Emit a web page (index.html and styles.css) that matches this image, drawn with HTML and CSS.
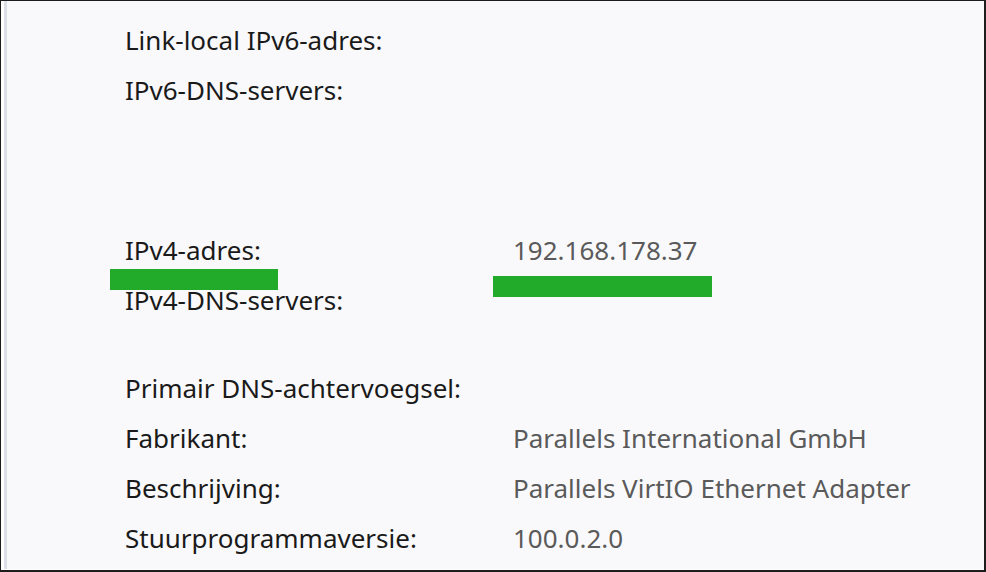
FILE: index.html
```html
<!DOCTYPE html>
<html lang="nl">
<head>
<meta charset="utf-8">
<title>Netwerkdetails</title>
<link rel="stylesheet" href="styles.css">
</head>
<body>
<div class="frame">
  <div class="panel">
    <div class="group group-a">
      <div class="row"><span class="label">Link-local IPv6-adres:</span><span class="value"></span></div>
      <div class="row"><span class="label">IPv6-DNS-servers:</span><span class="value"></span></div>
    </div>
    <div class="group group-b">
      <div class="row"><span class="label">IPv4-adres:</span><span class="value">192.168.178.37</span></div>
      <div class="row"><span class="label">IPv4-DNS-servers:</span><span class="value"></span></div>
    </div>
    <div class="group group-c">
      <div class="row"><span class="label">Primair DNS-achtervoegsel:</span><span class="value"></span></div>
      <div class="row"><span class="label">Fabrikant:</span><span class="value">Parallels International GmbH</span></div>
      <div class="row"><span class="label">Beschrijving:</span><span class="value">Parallels VirtIO Ethernet Adapter</span></div>
      <div class="row"><span class="label">Stuurprogrammaversie:</span><span class="value">100.0.2.0</span></div>
    </div>
    <div class="mark mark-1"></div>
    <div class="mark mark-2"></div>
  </div>
</div>
</body>
</html>
```
FILE: styles.css
```css
html, body {
  margin: 0;
  padding: 0;
  background: #ffffff;
}
.frame {
  box-sizing: border-box;
  width: 986px;
  height: 572px;
  border-top: 1px solid #1c1c1c;
  border-left: 1px solid #1c1c1c;
  border-right: 2px solid #1c1c1c;
  border-bottom: 2px solid #1c1c1c;
  background: #ffffff;
  padding: 0 0 1px 3px;
  overflow: hidden;
}
.panel {
  position: relative;
  box-sizing: border-box;
  height: 100%;
  border-left: 3px solid #dcdfe6;
  background: #f9f9fb;
  padding-left: 118px;
  font-family: "Noto Sans", "Open Sans", sans-serif;
  font-size: 26px;
  color: #1a1a1a;
}
.row {
  display: grid;
  grid-template-columns: 388px 1fr;
  height: 50px;
  line-height: 50px;
  white-space: nowrap;
}
.value {
  color: #5a5a5a;
}
.group-a {
  padding-top: 14px;
}
.group-b {
  margin-top: 110px;
}
.group-c {
  margin-top: 38px;
}
.mark {
  position: absolute;
  background: #22ab2a;
}
.mark-1 {
  left: 103px;
  top: 268px;
  width: 168px;
  height: 21px;
}
.mark-2 {
  left: 486px;
  top: 275px;
  width: 219px;
  height: 21px;
}
```
